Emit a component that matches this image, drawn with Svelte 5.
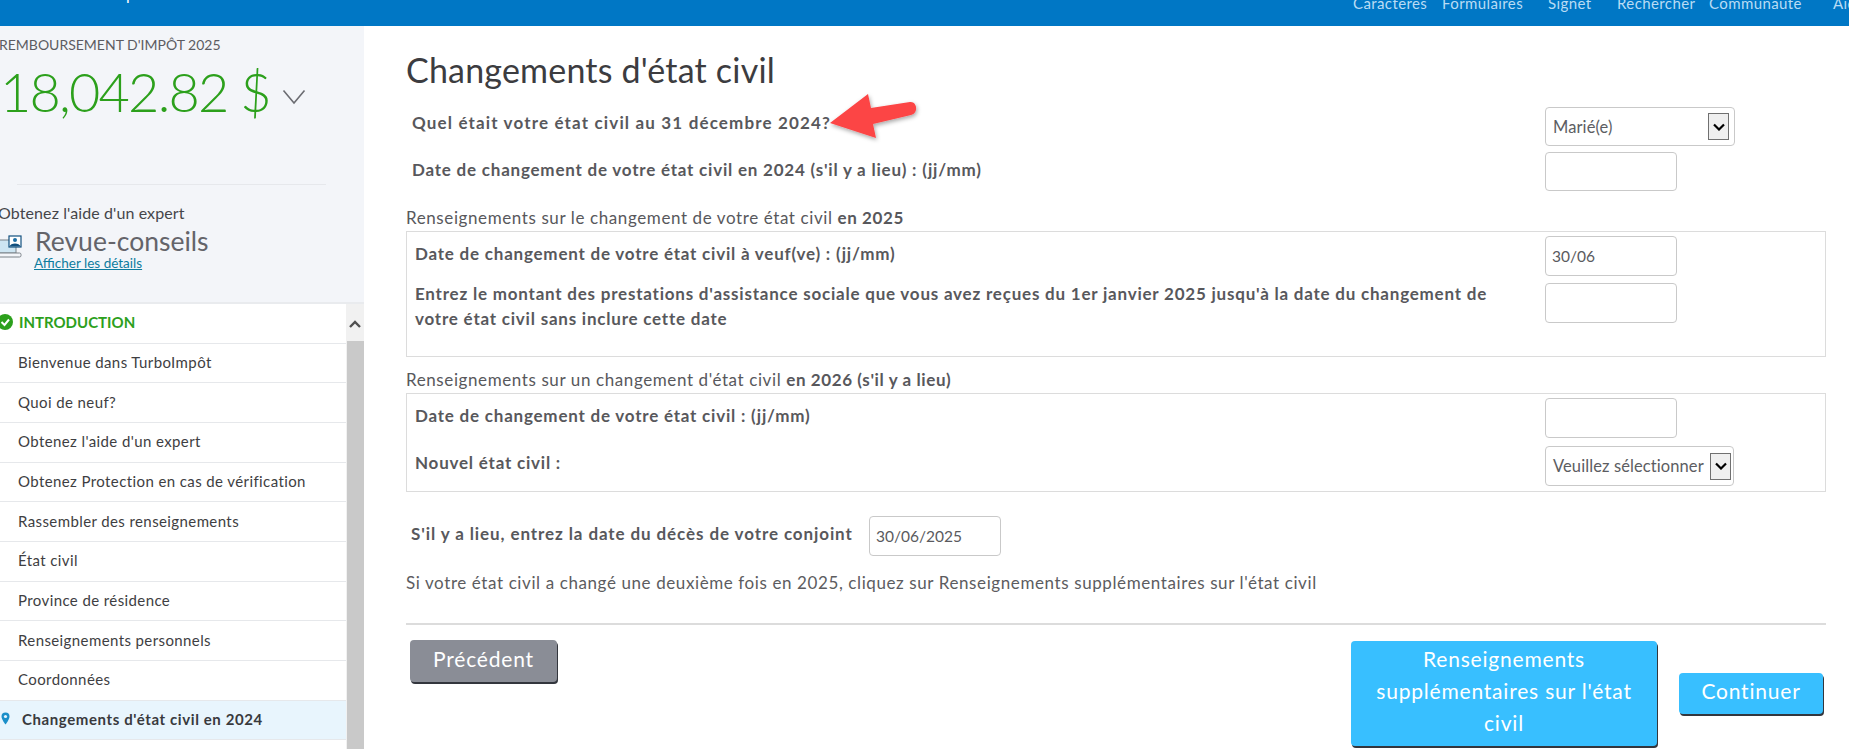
<script>
  const tabs = [
    ['Caractères', 1353], ['Formulaires', 1442], ['Signet', 1548], ['Rechercher', 1617], ['Communauté', 1709], ['Aide', 1833]
  ];
  const items = ['Bienvenue dans TurboImpôt', 'Quoi de neuf?', "Obtenez l'aide d'un expert", 'Obtenez Protection en cas de vérification', 'Rassembler des renseignements', 'État civil', 'Province de résidence', 'Renseignements personnels', 'Coordonnées'];
</script>

<div class="page">
  <header class="top">
    <span class="logo-tail">p</span>
    {#each tabs as t}
      <span class="tab" style="left:{t[1]}px">{t[0]}</span>
    {/each}
  </header>
  <div class="body">
    <aside class="side">
      <div class="refund">
        <div class="refund-label">REMBOURSEMENT D'IMPÔT 2025</div>
        <div class="amount-row">
          <span class="amount">18,042.82 $</span>
          <svg class="chev" width="24" height="16" viewBox="0 0 24 16"><path d="M1.5 1.5 12 14 22.5 1.5" fill="none" stroke="#6b6c72" stroke-width="1.6"/></svg>
        </div>
      </div>
      <div class="side-rule"></div>
      <div class="expert">
        <div class="expert-title">Obtenez l'aide d'un expert</div>
        <div class="expert-row">
          <svg class="lap" width="22" height="24" viewBox="0 0 22 24">
            <rect x="-4" y="5" width="20" height="13" fill="#cde5f2" stroke="#7b8288"/>
            <rect x="-6" y="18" width="27" height="4" rx="1.5" fill="#f3f5f9" stroke="#7b8288"/>
            <rect x="9" y="1" width="12" height="11" fill="#fff" stroke="#12507f" stroke-width="1.2"/>
            <circle cx="15" cy="5" r="2" fill="#1d6fa5"/>
            <path d="M9.5 11.5c1-4 10-4 11 0z" fill="#12507f"/>
          </svg>
          <div>
            <div class="expert-name">Revue-conseils</div>
            <div class="expert-link">Afficher les détails</div>
          </div>
        </div>
      </div>
      <div class="navwrap">
        <nav class="nav">
          <div class="nav-row intro">
            <svg width="14" height="16" viewBox="0 0 14 16" class="check"><circle cx="5" cy="8" r="8" fill="#2ca01c"/><path d="M1.5 8 4.5 11 9 5.5" fill="none" stroke="#fff" stroke-width="2"/></svg>
            INTRODUCTION
          </div>
          {#each items as it}
            <div class="nav-row">{it}</div>
          {/each}
          <div class="nav-row active">
            <svg width="9" height="13" viewBox="0 0 9 13" class="pin"><path d="M4.5 0.5a4 4 0 0 1 4 4c0 3-4 8-4 8s-4-5-4-8a4 4 0 0 1 4-4z" fill="#1a8fc9"/><circle cx="4.5" cy="4.5" r="1.6" fill="#e8f5fd"/></svg>
            Changements d'état civil en 2024
          </div>
        </nav>
        <div class="scroll">
          <div class="scroll-btn"><svg width="12" height="8" viewBox="0 0 12 8"><path d="M1 7 6 2l5 5" fill="none" stroke="#505050" stroke-width="2.4"/></svg></div>
          <div class="scroll-thumb"></div>
        </div>
      </div>
    </aside>

    <main class="main">
      <h1>Changements d'état civil</h1>
      <svg class="arrow" width="100" height="60" viewBox="0 0 100 60">
        <defs><filter id="sh" x="-20%" y="-20%" width="150%" height="150%"><feDropShadow dx="1" dy="2" stdDeviation="2" flood-color="#000" flood-opacity=".35"/></filter></defs>
        <path d="M5 34 43 5l3 14 39-6c7-1 9 11 1 13l-38 9 3 14z" fill="#fc4445" filter="url(#sh)"/>
      </svg>
      <div class="q q1">
        <label for="s1">Quel était votre état civil au 31 décembre 2024?</label>
        <div class="fake-select wide" id="s1"><span>Marié(e)</span><i><svg width="12" height="8" viewBox="0 0 12 8"><path d="M1 1.5 6 6.5 11 1.5" fill="none" stroke="#000" stroke-width="2.2"/></svg></i></div>
      </div>
      <div class="q q2">
        <label for="i2">Date de changement de votre état civil en 2024 (s'il y a lieu) : (jj/mm)</label>
        <div class="field" id="i2"></div>
      </div>

      <div class="sec sec1">Renseignements sur le changement de votre état civil <b>en 2025</b></div>
      <section class="box b1">
        <div class="brow r1">
          <span class="lbl">Date de changement de votre état civil à veuf(ve) : (jj/mm)</span>
          <div class="field">30/06</div>
        </div>
        <div class="brow r2">
          <span class="lbl two">Entrez le montant des prestations d'assistance sociale que vous avez reçues du 1er janvier 2025 jusqu'à la date du changement de votre état civil sans inclure cette date</span>
          <div class="field"></div>
        </div>
      </section>

      <div class="sec sec2">Renseignements sur un changement d'état civil <b>en 2026 (s'il y a lieu)</b></div>
      <section class="box b2">
        <div class="brow r1">
          <span class="lbl">Date de changement de votre état civil : (jj/mm)</span>
          <div class="field"></div>
        </div>
        <div class="brow r3">
          <span class="lbl">Nouvel état civil :</span>
          <div class="fake-select wide tall"><span>Veuillez sélectionner</span><i><svg width="12" height="8" viewBox="0 0 12 8"><path d="M1 1.5 6 6.5 11 1.5" fill="none" stroke="#000" stroke-width="2.2"/></svg></i></div>
        </div>
      </section>

      <div class="death">
        <span class="lbl">S'il y a lieu, entrez la date du décès de votre conjoint</span>
        <div class="field">30/06/2025</div>
      </div>
      <p class="info">Si votre état civil a changé une deuxième fois en 2025, cliquez sur Renseignements supplémentaires sur l'état civil</p>
      <hr />
      <div class="actions">
        <button class="btn prev">Précédent</button>
        <button class="btn more">Renseignements supplémentaires sur l'état civil</button>
        <button class="btn cont">Continuer</button>
      </div>
    </main>
  </div>
</div>

<style>
  :global(body) { margin: 0; overflow: hidden; background: #fff; }
  .page { width: 1849px; height: 749px; overflow: hidden; font-family: Lato, "Open Sans", sans-serif; display: flex; flex-direction: column; color: #555; }
  .top { height: 26px; background: #0077c5; position: relative; flex: none; overflow: hidden; }
  .tab { position: absolute; top: -5px; font-size: 15px; letter-spacing: .4px; line-height: 17px; color: #b9dcf4; white-space: nowrap; }
  .logo-tail { position: absolute; left: 126px; top: -14px; font-size: 16px; color: #fff; line-height: 16px; }
  .body { display: flex; flex: 1; min-height: 0; }
  .side { width: 364px; flex: none; background: #f3f5f9; display: flex; flex-direction: column; overflow: hidden; }
  .refund { height: 158px; box-sizing: border-box; padding-top: 10px; }
  .refund-label { font-size: 14px; line-height: 17px; color: #5c5c62; margin-left: -1px; white-space: nowrap; }
  .amount-row { display: flex; align-items: center; margin-top: 9px; height: 60px; }
  .amount { font-size: 54px; font-weight: 300; letter-spacing: -1.8px; color: #2ca01c; line-height: 60px; margin-left: 0; white-space: nowrap; }
  .chev { margin-left: 12px; margin-top: 10px; }
  .side-rule { height: 1px; background: #e6e8ec; margin: 0 38px 0 17px; }
  .expert { height: 117px; box-sizing: border-box; padding-top: 19px; }
  .expert-title { font-size: 16px; letter-spacing: .1px; line-height: 18px; color: #45454a; margin-left: -2px; white-space: nowrap; }
  .expert-row { display: flex; margin-top: 4px; }
  .lap { margin-top: 9px; flex: none; }
  .expert-name { font-size: 26.5px; line-height: 31px; color: #64646a; margin-left: 13px; white-space: nowrap; }
  .expert-link { font-size: 13.5px; line-height: 14px; color: #0e7c9e; text-decoration: underline; margin-left: 12px; margin-top: -1px; }
  .navwrap { flex: 1; display: flex; min-height: 0; border-top: 2px solid #e9ebee; }
  .nav { width: 346px; flex: none; background: #fff; }
  .nav-row { height: 39.67px; box-sizing: border-box; border-bottom: 1.5px solid #e6e8eb; display: flex; align-items: center; padding-left: 18px; padding-bottom: 2px; font-size: 15px; letter-spacing: .4px; color: #3e3e42; white-space: nowrap; }
  .intro { color: #2ca01c; font-weight: 700; padding-left: 0; font-size: 15px; letter-spacing: 0; }
  .check { margin-right: 5px; flex: none; }
  .active { background: #e8f5fd; font-weight: 700; color: #393a3d; padding-left: 0; letter-spacing: .6px; }
  .pin { margin: 0 12px 0 1px; flex: none; }
  .scroll { flex: 1; background: #f1f1f1; display: flex; flex-direction: column; }
  .scroll-btn { height: 37px; display: flex; align-items: center; justify-content: center; padding-top: 2px; box-sizing: border-box; }
  .scroll-thumb { flex: 1; background: #c9c9c9; margin-left: 1px; }

  .main { flex: 1; position: relative; padding: 0 23px 0 42px; min-width: 0; }
  h1 { margin: 0; padding-top: 24px; height: 55px; font-size: 34px; letter-spacing: .2px; line-height: 40px; font-weight: 400; color: #3c3c40; box-sizing: content-box; white-space: nowrap; }
  .arrow { position: absolute; left: 461px; top: 63px; pointer-events: none; }
  label, .lbl { font-weight: 700; font-size: 17px; letter-spacing: .78px; line-height: 29px; color: #58585c; white-space: nowrap; }
  .q { display: grid; grid-template-columns: 1133px auto; padding-left: 6px; align-items: center; }
  .q label { align-self: start; }
  .q1 { height: 45px; margin-top: 2px; }
  .q2 { height: 39px; }
  .q1 label { margin-top: 1px; letter-spacing: 1.15px; }
  .q2 label { margin-top: 3px; }
  .field { width: 132px; height: 40px; box-sizing: border-box; border: 1px solid #c9c9c9; border-radius: 4px; background: #fff; font-size: 15.5px; color: #5a5a5e; padding: 0 6px; display: flex; align-items: center; }
  .q2 .field { height: 39px; }
  .fake-select { height: 39px; box-sizing: border-box; border: 1px solid #c9c9c9; border-radius: 4px; background: #fff; font-size: 16.5px; letter-spacing: .1px; color: #5c5d62; display: flex; align-items: center; justify-content: space-between; padding: 0 5px 0 7px; white-space: nowrap; }
  .fake-select.wide { width: 190px; align-self: start; margin-top: 0; }
  .fake-select.tall { height: 40px; width: 189px; padding-right: 2px; }
  .fake-select i { width: 21px; height: 27px; box-sizing: border-box; border: 1px solid #707070; background: #efefef; display: flex; align-items: center; justify-content: center; flex: none; }
  .sec { font-size: 17px; letter-spacing: .6px; line-height: 22px; color: #58585c; white-space: nowrap; }
  .sec1 { margin-top: 16px; height: 24px; }
  .sec2 { margin-top: 12px; height: 24px; }
  .box { border: 1px solid #dcdcdc; width: 1420px; box-sizing: border-box; padding: 4px 0 0 8px; }
  .b1 { height: 126px; }
  .b2 { height: 99px; }
  .brow { display: grid; grid-template-columns: 1130px auto; }
  .brow .lbl { align-self: start; }
  .b1 .r1 { height: 47px; }
  .b1 .r2 .lbl.two { line-height: 25px; width: 1090px; margin-top: -2px; white-space: normal; }
  .b1 .r1 .lbl { margin-top: 3px; }
  .b2 .r1 { height: 48px; }
  .b2 .r1 .lbl { margin-top: 3px; }
  .b2 .r3 .lbl { margin-top: 2px; }
  .death { display: flex; align-items: center; margin-top: 24px; padding-left: 5px; }
  .death .lbl { width: 458px; margin-top: -6px; letter-spacing: .9px; }
  .death .field { flex: none; }
  .info { margin: 15px 0 0; font-size: 17px; letter-spacing: .6px; line-height: 24px; color: #5c5c60; white-space: nowrap; }
  hr { border: none; height: 2px; background: #dcdcdc; margin: 28px 0 0; width: 1420px; }
  .actions { display: flex; align-items: flex-start; position: relative; width: 1420px; margin-top: 15px; }
  .btn { border: none; border-radius: 4px; color: #fff; font-family: inherit; font-size: 21px; letter-spacing: .8px; line-height: 32px; text-align: center; padding: 0 0 5px; box-shadow: 1px 2px 0 #33363d; }
  .prev { width: 147px; height: 42px; background: #8a8d96; margin-left: 4px; }
  .more { width: 306px; height: 105px; background: #38bfff; margin-left: 794px; margin-top: 1px; padding: 0 12px 5px; }
  .cont { width: 144px; height: 41px; background: #38bfff; margin-left: 22px; margin-top: 33px; }
</style>
